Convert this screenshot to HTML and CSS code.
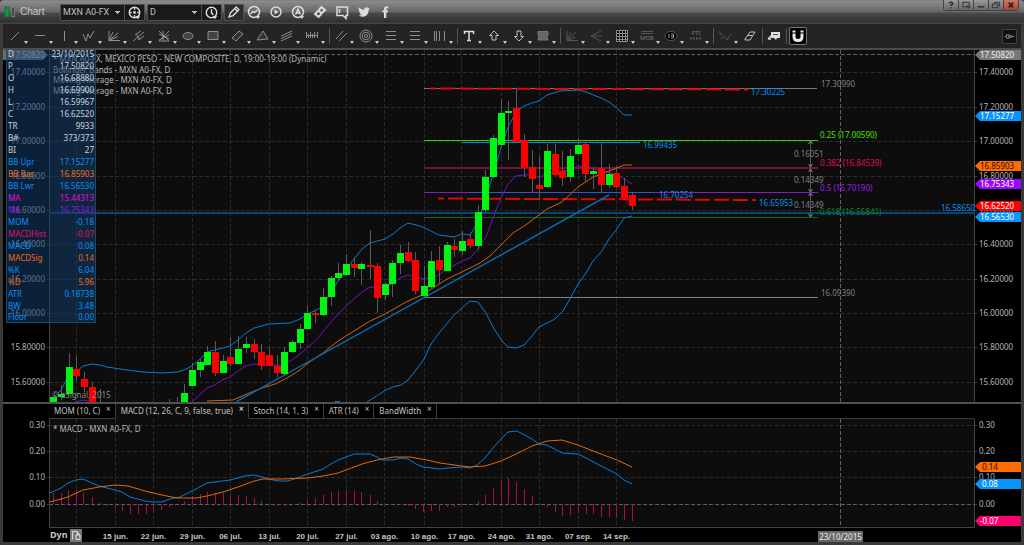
FILE: index.html
```html
<!DOCTYPE html>
<html lang="es">
<head>
<meta charset="utf-8">
<title>Chart</title>
<link rel="stylesheet" href="styles.css">
</head>
<body>
<div class="window">
  <header class="titlebar">
    <svg class="logo" viewBox="0 0 13 12" aria-hidden="true"><rect x="1" y="1" width="4" height="10" fill="#0c9a48" stroke="#1c6b3a"/><rect x="7.500" y="1.500" width="3" height="9" fill="#444" stroke="#777"/></svg>
    <h1 class="title">Chart</h1>
    <div class="combo combo-symbol">
      <select aria-label="Symbol"><option>MXN A0-FX</option></select>
      <button type="button" aria-label="Symbol settings"><svg viewBox="0 0 20 20"><circle cx="10" cy="10" r="5.500" class="bold"/><circle cx="10" cy="10" r="1.500" class="solid"/><path d="M10 5v2M10 13v2M5 10h2M13 10h2" class="bold"/><path d="M11 14h5l-2.500 3z" class="solid"/></svg></button>
    </div>
    <div class="combo combo-interval">
      <select aria-label="Interval"><option>D</option></select>
      <button type="button" aria-label="Time template"><svg viewBox="0 0 20 20"><circle cx="10" cy="10" r="5.500" class="bold"/><path d="M10 6.500v4l2 2" class="bold"/><path d="M11 14h5l-2.500 3z" class="solid"/></svg></button>
    </div>
    <button type="button" class="draw" aria-label="Draw"><svg viewBox="0 0 20 20"><path d="M4.500 15.500l1.500-4.500 6.500-6.500 3 3L9 14zM11 6.500l2.500 2.500" class="bold"/></svg></button>
    <nav class="actions" aria-label="Actions">
      <button type="button" aria-label="Studies"><svg viewBox="0 0 20 20"><circle cx="10" cy="10" r="5.500" class="bold"/><path d="M6.500 12l2.500-2.500 1.500 1L13.500 8" class="bold"/><path d="M12 14h4l-2 3z" class="solid"/></svg></button>
      <button type="button" aria-label="Playback"><svg viewBox="0 0 20 20"><circle cx="10" cy="10" r="5" class="bold"/><path d="M8.500 7.500l4 2.500-4 2.500z" class="solid"/></svg></button>
      <button type="button" aria-label="Alerts"><svg viewBox="0 0 20 20"><circle cx="10" cy="10" r="5.500" class="bold"/><path d="M7.500 12.500L10 7l2.500 5.500M8.500 11h3" class="bold"/><path d="M12 14h4l-2 3z" class="solid"/></svg></button>
      <button type="button" aria-label="Link"><svg viewBox="0 0 20 20"><path d="M9 7.500l2.500-2.500 3.500 3-3.500 3.500-2-1.500M11 12.500l-2.500 2.500L5 12l3.500-3.500 2 1.500" stroke="#ddd" stroke-width="2"/></svg></button>
      <button type="button" aria-label="Chat"><svg viewBox="0 0 20 20"><path d="M5 5h10.500v8.500H14v3l-3-3H5zM7.500 7v4" class="bold"/></svg></button>
      <button type="button" aria-label="Twitter"><svg viewBox="0 0 20 20"><path class="solid" d="M16 6.300l-1.400.4 1-1.300-1.500.5c-1.600-1.600-4.200-.4-3.900 1.900C8 7.700 6.200 6.800 5 5.300c-.8 1.400-.3 2.700.7 3.400l-1-.3c0 1.200.9 2.200 2 2.500H5.600c.4 1 1.200 1.600 2.300 1.700-.9.800-2.100 1.100-3.500 1 5 2.900 10.400-.3 10.200-5.700z"/></svg></button>
      <button type="button" aria-label="Facebook"><svg viewBox="0 0 20 20"><path class="solid" d="M8 16v-5.500H6.500V8.300H8V7c0-2.200 1.200-3 4-2.700v2.100c-1.300-.1-1.700 0-1.700.9v1H12l-.3 2.200h-1.400V16z"/></svg></button>
    </nav>
    <div class="controls">
      <button type="button" aria-label="Help"><svg viewBox="0 0 15 11"><path d="M5.500 3.500q2-2 4 0 0 1.500-2 2.200v1M7.500 8v1.200" stroke-width="1.500"/></svg></button>
      <button type="button" aria-label="Popout"><svg viewBox="0 0 15 11"><path d="M7 7.500H4v-5h7V6M8.500 6.500h3v2h-3z"/></svg></button>
      <button type="button" aria-label="Minimize"><svg viewBox="0 0 15 11"><path d="M4 7.500h7" stroke-width="1.500"/></svg></button>
      <button type="button" aria-label="Restore"><svg viewBox="0 0 15 11"><path d="M3.500 4.500h6v4h-6zM6 4V2.500h5.500v4H10"/></svg></button>
      <button type="button" class="close" aria-label="Close"><svg viewBox="0 0 15 11"><path d="M5 3l5 5M10 3L5 8"/></svg></button>
    </div>
  </header>

  <div class="toolbar" role="toolbar" aria-label="Drawing tools">
    <div class="group g13">
      <button type="button" class="tool" aria-label="Trend line"><svg viewBox="0 0 20 20"><path d="M6 14l8-8"/></svg></button>
      <button type="button" class="tool" aria-label="Horizontal line"><svg viewBox="0 0 20 20"><path d="M5 9.500h10"/></svg></button>
      <button type="button" class="tool" aria-label="Vertical line"><svg viewBox="0 0 20 20"><path d="M9.500 5v10"/></svg></button>
      <button type="button" class="tool" aria-label="Elliott wave"><svg viewBox="0 0 20 20"><path d="M4 8l3 7 2-7 2 4 4-7"/></svg></button>
      <button type="button" class="tool" aria-label="Speed fan"><svg viewBox="0 0 20 20"><path d="M5 5v9.500h11M5 14.500L9 6M5 14.500L14 7M5 14.500l9-4"/></svg></button>
      <button type="button" class="tool" aria-label="Pitchfork"><svg viewBox="0 0 20 20"><path d="M4 15L15 6M6 9l6-4M9 14l6-4M7 8l4 6"/></svg></button>
      <button type="button" class="tool" aria-label="Gann fan"><svg viewBox="0 0 20 20"><path d="M5 5l10 10M5 15L15 5M9 5v10M5 8l10 5M5 14l10-5M5 15h10"/></svg></button>
      <button type="button" class="tool" aria-label="Ellipse"><svg viewBox="0 0 20 20"><ellipse cx="10" cy="10" rx="5" ry="3.500" fill="#444"/></svg></button>
      <button type="button" class="tool" aria-label="Rectangle"><svg viewBox="0 0 20 20"><path d="M5 5.500h10v8H5z" fill="#444"/></svg></button>
      <button type="button" class="tool" aria-label="Parallelogram"><svg viewBox="0 0 20 20"><path d="M4 12l7-7 4 3-7 7z" fill="#333"/></svg></button>
      <button type="button" class="tool" aria-label="Triangle"><svg viewBox="0 0 20 20"><path d="M4 14l6-9 5 8z" fill="#333"/></svg></button>
      <button type="button" class="tool" aria-label="Channel"><svg viewBox="0 0 20 20"><path d="M4 10l11-5M4 12.500l11-5M4 15l11-5"/></svg></button>
      <button type="button" class="tool" aria-label="Time cycles"><svg viewBox="0 0 20 20"><path d="M4.500 6v6M8.500 6v6M12.500 6v6M15.500 6v6M4 9.500h12M6.500 8v4M10.500 8v4"/></svg></button>
    </div>
    <i class="sep"></i>
    <div class="group g5">
      <button type="button" class="tool" aria-label="Parallel lines"><svg viewBox="0 0 20 20"><path d="M5 13l7-8M8 15l8-8"/></svg></button>
      <button type="button" class="tool" aria-label="Fibonacci circles"><svg viewBox="0 0 20 20"><circle cx="10" cy="10" r="6"/><circle cx="10" cy="10" r="3.800"/><circle cx="10" cy="10" r="1.600"/></svg></button>
      <button type="button" class="tool" aria-label="Retracement"><svg viewBox="0 0 20 20"><path d="M5 5.500h10M5 9.500h10M5 13.500h10"/></svg></button>
      <button type="button" class="tool" aria-label="Extension"><svg viewBox="0 0 20 20"><path d="M5 5.500h10M5 9.500h10M5 13.500h10"/></svg></button>
      <button type="button" class="tool" aria-label="Time zones"><svg viewBox="0 0 20 20"><path d="M4.500 5v10M6.500 5v10M9.500 5v10M14.500 5v10"/></svg></button>
    </div>
    <i class="sep"></i>
    <div class="group g4">
      <button type="button" class="tool" aria-label="Text"><svg viewBox="0 0 20 20"><path d="M5.500 8V5.500h9V8M10 5.500v9M8 14.500h4" class="bold"/></svg></button>
      <button type="button" class="tool" aria-label="Arrow up"><svg viewBox="0 0 20 20"><path d="M10 5l4.500 4.500H12V14H8V9.500H5.500z" class="bright"/></svg></button>
      <button type="button" class="tool" aria-label="Arrow down"><svg viewBox="0 0 20 20"><path d="M10 15l4.500-4.500H12V5H8v5.500H5.500z" class="bright"/></svg></button>
      <button type="button" class="tool" aria-label="Note"><svg viewBox="0 0 20 20"><path d="M5 5.500h10v4l-1 1 1 3.500H5l1-4-1-1z" fill="#666" stroke="#777"/></svg></button>
    </div>
    <i class="sep"></i>
    <div class="group g6">
      <button type="button" class="tool dim" aria-label="Gann angles"><svg viewBox="0 0 20 20"><path d="M5 5v9.500h11M5 14.500L9 6M5 14.500L14 6M5 14.500l8-3"/></svg></button>
      <button type="button" class="tool dim" aria-label="Rays"><svg viewBox="0 0 20 20"><path d="M14 5L4 10l10 5M4 10h11"/></svg></button>
      <button type="button" class="tool" aria-label="Gann box"><svg viewBox="0 0 20 20"><path d="M4.500 4.500h11v11h-11zM4.500 7.500h11M4.500 10.500h11M4.500 13.500h11M7.500 4.500v11M10.500 4.500v11M13.500 4.500v11" fill="#000"/></svg></button>
      <button type="button" class="tool dim" aria-label="Make or break"><svg viewBox="0 0 20 20"><path d="M4 5.500h12M4 7.500h12"/><text x="10" y="14" text-anchor="middle" class="mini">MOB</text></svg></button>
      <button type="button" class="tool dim" aria-label="Ellipse projection"><svg viewBox="0 0 20 20"><ellipse cx="10" cy="10" rx="6" ry="4.500" fill="#000"/><path d="M8 8v4M10 8h2.500v4H10M10 10h2" class="bright"/></svg></button>
      <button type="button" class="tool dim" aria-label="Profit taking index"><svg viewBox="0 0 20 20"><text x="10" y="9" text-anchor="middle" class="mini">PTI</text><path d="M4 12.500h12" stroke-dasharray="2 1" stroke-width="2"/></svg></button>
    </div>
    <i class="sep"></i>
    <div class="group tail">
      <button type="button" class="tool dim" aria-label="Wave labels"><svg viewBox="0 0 20 20"><path d="M5 5v3h3M6 13l3-3 3 4 4-6"/></svg></button>
      <button type="button" class="tool plain" aria-label="Eraser"><svg viewBox="0 0 20 20"><path d="M5 13l5-7h5l-5 8H5zM8 9.500h4" class="bright"/></svg></button>
    </div>
    <i class="sep"></i>
    <button type="button" class="tool plain" aria-label="Comment"><svg viewBox="0 0 20 20"><path d="M7 6h9v6h-3l-1 2-2-2H7z" class="solid"/><path d="M4 13l3-3h3M4 13h3" class="bold"/><path d="M9 8.500h5" stroke="#555"/></svg></button>
    <i class="sep"></i>
    <button type="button" class="tool plain magnet" aria-label="Magnet" aria-pressed="true"><svg viewBox="0 0 16 16"><path d="M4 2.500v6q0 4 4 4t4-4v-6" stroke="#e8e8e8" stroke-width="3"/><path d="M2 5h4M10 5h4" stroke="#000"/></svg></button>
    <button type="button" class="pin" aria-label="Pin toolbar"><svg viewBox="0 0 15 15"><path d="M2 7.500h2M4 5.500h3v4H4zM7 6.500h3v2H7zM10 7.500h3"/></svg></button>
  </div>

  <main class="stage">
    <svg id="price" class="plot" viewBox="3 50 1018 352" role="img" aria-label="MXN A0-FX"></svg>
    <table class="cursor" aria-label="Cursor window"><tbody id="cursor"></tbody></table>
  </main>

  <div class="tabs" role="tablist">
    <div class="tab"><button type="button" role="tab">MOM (10, C)</button><button type="button" class="x" aria-label="Close MOM">×</button></div>
    <div class="tab active"><button type="button" role="tab" aria-selected="true">MACD (12, 26, C, 9, false, true)</button><button type="button" class="x" aria-label="Close MACD">×</button></div>
    <div class="tab"><button type="button" role="tab">Stoch (14, 1, 3)</button><button type="button" class="x" aria-label="Close Stoch">×</button></div>
    <div class="tab"><button type="button" role="tab">ATR (14)</button><button type="button" class="x" aria-label="Close ATR">×</button></div>
    <div class="tab"><button type="button" role="tab">BandWidth</button><button type="button" class="x" aria-label="Close BandWidth">×</button></div>
  </div>

  <section class="study">
    <svg id="macd" class="plot" viewBox="3 419 1018 123" role="img" aria-label="MACD"></svg>
    <div class="dyn"><span>Dyn</span><button type="button" aria-label="Lock scale"><svg viewBox="0 0 12 13"><path d="M2.500 10.500v-8h5v3M6 6h4v4.500H6zM7 6V4.500h2V6" fill="none" stroke="#ddd"/></svg></button></div>
  </section>
</div>
<script src="chart.js"></script>
</body>
</html>
```
FILE: styles.css
```css
* { box-sizing: border-box; }
body {
  margin: 0;
  background: #000;
  color: #c0c0c0;
  font: 8px/12px "Noto Sans", Arial, sans-serif;
}
button, select { font: inherit; color: inherit; padding: 0; margin: 0; border: 0; background: none; }
.window {
  min-height: 100vh;
  background: #3b3b3b;
  padding: 0 3px 3px;
  overflow: hidden;
}
.titlebar {
  display: flex;
  align-items: center;
  height: 24px;
  margin: 0 -3px;
  padding-left: 4px;
  border-radius: 4px 4px 0 0;
  background: linear-gradient(#777 0, #8c8c8c 1px, #666 12px, #4a4a4a 13px, #303030 22px, #444 23px);
}
.titlebar svg, .toolbar svg { display: block; fill: none; stroke: #8e8e8e; }
.titlebar svg { stroke: #ddd; }
.titlebar .solid, .toolbar .solid { fill: #dcdcdc; stroke: none; }
.titlebar .bold, .toolbar .bold { stroke: #dcdcdc; stroke-width: 1.5; }
.toolbar .bright { stroke: #c0c0c0; }
.logo { width: 13px; height: 12px; }
.title { margin: 0 0 0 3px; width: 40px; font-family: "Liberation Sans", Arial, sans-serif; font-size: 10px; font-weight: 400; color: #c8c8c8; }
.combo { display: flex; height: 17px; border: 1px solid #505050; border-radius: 1px; background: #191919; }
.combo select {
  appearance: none;
  flex: 1;
  min-width: 0;
  padding-left: 2px;
  font-family: Roboto, Arial, sans-serif;
  font-size: 9px;
  background: linear-gradient(#bbb, #bbb) no-repeat right 4px top 6px / 5px 1px, linear-gradient(#bbb, #bbb) no-repeat right 5px top 7px / 3px 1px, linear-gradient(#bbb, #bbb) no-repeat right 6px top 8px / 1px 1px;
}
.combo button { width: 20px; height: 15px; border-left: 1px solid #505050; }
.combo button svg { width: 19px; height: 19px; margin-top: -2px; }
.combo-symbol { width: 85px; }
.combo-interval { width: 75px; margin-left: 2px; }
.draw { width: 20px; height: 17px; margin-left: 2px; border: 1px solid #505050; background: #2c2c2c; }
.draw svg { width: 18px; height: 18px; margin-top: -2px; }
.actions { display: flex; gap: 2px; }
.actions svg { width: 20px; height: 20px; }
.controls { display: flex; align-self: flex-start; gap: 1px; margin: 0 5px 0 auto; padding: 0 1px 1px; background: #444; border-radius: 0 0 3px 3px; }
.controls button { width: 14px; height: 10px; background: linear-gradient(#999, #686868); }
.controls svg { width: 14px; height: 10px; stroke: #2c2c2c; }
.controls .close { background: linear-gradient(#cb7767, #a84636); }
.controls .close svg { stroke: #30201c; stroke-width: 2; }

.toolbar {
  display: flex;
  align-items: center;
  height: 26px;
  padding-left: 2px;
  border-bottom: 2px solid #4c4c4c;
  background: #242424;
}
.group { display: grid; flex: none; }
.g13 { width: 322px; grid-template-columns: repeat(13, 1fr); }
.g5 { width: 124px; grid-template-columns: repeat(5, 1fr); }
.g4 { width: 99px; grid-template-columns: repeat(4, 1fr); }
.g6 { width: 149px; grid-template-columns: repeat(6, 1fr); }
.tail { width: 45px; grid-template-columns: 25px 20px; }
.sep { flex: none; width: 1px; height: 16px; margin: 0 1px 0 2px; background: #555; }
.tool { display: flex; align-items: flex-end; height: 20px; }
.tool svg { width: 20px; height: 20px; flex: none; }
.tool::after { content: ""; margin: 0 0 2px -1px; border: solid transparent; border-width: 3px 2px 0; border-top-color: #ccc; }
.plain::after { display: none; }
.dim svg { stroke: #555; }
.dim .bright { stroke: #999; }
.mini { font-size: 6px; fill: #777; stroke: none; }
.magnet { width: 20px; }
.magnet svg { width: 18px; height: 18px; margin: 1px; border: 1px solid #777; border-radius: 2px; background: #000; }
.pin { width: 15px; height: 15px; margin: 0 4px 0 auto; border: 1px solid #444; border-radius: 2px; background: #111; }
.pin svg { width: 13px; height: 13px; }

.stage { position: relative; overflow: hidden; border-bottom: 2px solid #505050; background: #000; }
.plot { display: block; width: 100%; height: auto; font-size: 8px; }
.cursor {
  position: absolute;
  top: -3px;
  left: 3px;
  width: 90px;
  border: 1px solid #1b4a62;
  border-spacing: 0;
  background: rgba(20, 60, 105, .55);
}
.cursor th, .cursor td { height: 12px; padding: 0 1px; line-height: 12px; }
.cursor tr:last-child > * { height: 10px; line-height: 10px; }
.cursor th { font-weight: 400; text-align: left; }
.cursor td { text-align: right; }

.tabs { display: flex; height: 15px; padding-left: 46px; background: #000; }
.tab { display: flex; gap: 6px; padding: 0 4px 0 5px; border: solid #3c3c3c; border-width: 0 1px 1px 0; }
.tab.active { background: #0d0d0d; border-bottom-color: #0d0d0d; }
.tabs::after { content: ""; flex: 1; margin-right: 47px; border-bottom: 1px solid #3c3c3c; }
.x { align-self: flex-start; height: 9px; line-height: 8px; }
.active .x { color: #fff; }

.study { display: grid; background: #000; }
.study > * { grid-area: 1 / 1; }
.dyn { display: flex; align-self: end; justify-self: start; align-items: center; gap: 2px; height: 14px; margin-left: 47px; font-size: 9px; font-weight: 700; }
.dyn button { width: 12px; height: 13px; background: #777; }
.dyn svg { display: block; }

.grid { stroke: #292929; stroke-dasharray: 4 2; }
.cross { stroke: #606060; stroke-dasharray: 4 2; }
.edge { stroke: #444; }
.crisp { shape-rendering: crispEdges; }
.line { fill: none; stroke-width: 1; stroke-linejoin: round; }
.axis { fill: #b4b4b4; }
.head { fill: #b8b8b8; }
.date { fill: #c4c4c4; font-family: "Liberation Sans", Arial, sans-serif; font-weight: 700; }
```
FILE: chart.js
```javascript
const NS = 'http://www.w3.org/2000/svg';
const BLUE = '#0d7bd0', ORANGE = '#d8600c', PURPLE = '#7812ba', UP = '#00f510', DOWN = '#fa0000';

function add(svg, name, attrs, text) {
  const el = document.createElementNS(NS, name);
  for (const key in attrs) el.setAttribute(key, attrs[key]);
  if (text !== undefined) el.textContent = text;
  svg.appendChild(el);
}
const line = (s, x1, y1, x2, y2, more) => add(s, 'line', { x1, y1, x2, y2, ...more });
const path = (s, points, stroke) => add(s, 'polyline', { points, stroke, class: 'line' });
const text = (s, x, y, str, more) => add(s, 'text', { x, y, ...more }, str);

function tag(s, y, str, fill, color, x = 980) {
  add(s, 'path', { d: `M975 ${y}l5-5h41v10h-41z`, fill });
  text(s, x, y + 3, str, { fill: color });
}

const weeks = [76.5, 115.5, 153.5, 192.5, 230.5, 269.5, 307.5, 346.5, 384.5, 424.5, 461.5, 501.5, 539.5, 578.5, 616.5];
const price = document.getElementById('price');
const macd = document.getElementById('macd');

/* price pane: background, grid and scales */
add(price, 'rect', { x: 49, y: 50, width: 926, height: 352, fill: '#0d0d0d' });
weeks.forEach(x => line(price, x, 50, x, 402, { class: 'grid crisp' }));
[['17.40000', 72.5], ['17.20000', 107.5], ['17.00000', 141.5], ['16.80000', 176.5], ['16.60000', 210.5],
 ['16.40000', 244.5], ['16.20000', 279.5], ['16.00000', 313.5], ['15.80000', 347.5], ['15.60000', 382.5]].forEach(([t, y]) => {
  line(price, 49, y, 974, y, { class: 'grid crisp' });
  line(price, 47, y, 50, y, { class: 'edge' });
  line(price, 974, y, 977, y, { class: 'edge' });
  text(price, 45, y + 2.5, t, { class: 'axis', 'text-anchor': 'end' });
  text(price, 979, y + 2.5, t, { class: 'axis' });
});
line(price, 49.5, 50, 49.5, 402, { class: 'edge' });
line(price, 974.5, 50, 974.5, 402, { class: 'edge' });
line(price, 49, 54.5, 974, 54.5, { class: 'cross crisp' });
line(price, 840.5, 50, 840.5, 402, { class: 'cross crisp' });
add(price, 'path', { d: 'M3 50h40l5 5-5 5H3z', fill: '#6c6c6c' });
text(price, 45, 58, '17.50820', { fill: '#ddd', 'text-anchor': 'end' });

/* levels */
[[424, 88.5, 817, '#777', 1], [424, 140.5, 818, '#3cc800', 1], [424, 168, 818, '#780f3c', 2], [424, 192.5, 818, '#8818d0', 1],
 [462, 142.5, 640, '#0b84dc', 1], [469, 192.5, 655, '#2858dc', 1], [49, 213, 974, '#07447a', 2],
 [424, 217.5, 818, '#086c12', 1], [424, 297.5, 818, '#808080', 1]].forEach(([x1, y, x2, stroke, w]) =>
  line(price, x1, y, x2, y, { stroke, 'stroke-width': w }));
line(price, 430, 88.5, 748, 89.5, { stroke: '#dc0808', 'stroke-width': 2, 'stroke-dasharray': '15 4', 'stroke-dashoffset': 9 });
line(price, 438, 198.5, 756, 200, { stroke: '#dc0808', 'stroke-width': 2, 'stroke-dasharray': '15 4', 'stroke-dashoffset': 9 });

/* averages, bands and trend line */
path(price, '53,398 61,390 68,377 76,372 83,366 92,364 100,365 107,367 127,370 143,372 162,373 177,372 184,370 192,366 200,359 207,352 215,350 230,346 238,340 246,333 254,328 269,324 290,323 300,319 308,314 320,308 331,293 338,281 346,270 354,259 362,249 370,243 385,239 393,234 400,228 408,223 420,226 431,231 439,235 454,237 462,234 470,235 478,222 485,200 493,175 501,148 508,127 516,112 524,106 532,103 539,101 547,95 560,91 578,90 586,92 601,98 609,102 617,108 624,115 632,115', BLUE);
path(price, '367,402 386,390 393,387 401,385 408,380 416,370 424,359 431,344 439,333 455,314 462,308 470,301 478,302 486,313 493,327 502,341 508,347 516,348 524,345 532,336 539,327 555,319 563,311 571,297 578,284 586,273 593,261 602,251 609,239 617,229 624,218 632,216', BLUE);
line(price, 335, 401.5, 340, 401.5, { stroke: BLUE });
path(price, '192,402 207,388 215,385 222,380 230,377 238,371 246,366 254,364 270,365 282,365 292,360 300,354 308,347 317,339 331,322 347,305 362,292 370,287 380,288 392,284 400,278 408,275 424,279 437,276 447,269 462,261 470,258 478,249 486,237 493,218 501,198 508,184 516,176 524,175 535,175 539,178 547,173 570,170 578,166 586,167 601,171 617,174 624,179 632,184', PURPLE);
path(price, '75,402 83,400 95,402', PURPLE);
path(price, '207,401 233,400 247,394 262,388 275,384 287,378 300,370 308,363 323,353 338,341 354,331 370,321 383,315 392,310 408,301 422,295 447,279 470,268 480,263 490,256 502,244 513,233 527,224 539,215 547,209 562,202 578,187 593,177 601,174 609,171 617,168 624,165 632,165', ORANGE);
line(price, 236, 402, 609, 195, { stroke: '#0a68ac', 'stroke-width': 1.5 });

/* candles: x, high, body top, body bottom, low, direction */
[[53,397,397,402,402,1],[61,385,394,397,400,1],[69,353,367,394,394,1],[76,355,369,376,381,0],[84,372,379,387,392,0],[92,382,387,402,402,0],
 [100,389,402,402,402,0],[169,399,402,402,402,0],[177,397,402,402,402,0],[184,384,393,402,402,1],[192,363,370,386,386,1],[200,358,362,370,377,1],
 [207,346,352,365,365,1],[215,341,352,373,376,0],[223,355,361,373,373,1],[230,337,357,364,366,0],[238,336,349,364,364,1],[246,337,344,348,353,1],
 [254,339,344,352,359,0],[261,344,352,366,370,0],[269,347,355,366,366,0],[277,355,366,373,377,0],[284,347,352,374,375,1],[292,340,342,352,353,1],
 [300,324,329,343,349,1],[307,306,313,329,330,1],[315,310,313,315,323,0],[323,288,297,315,316,1],[331,276,278,297,306,1],[338,263,273,278,280,1],
 [346,254,264,275,276,1],[354,257,264,268,277,0],[361,262,264,269,285,1],[370,230,265,267,279,0],[377,263,266,298,313,0],[385,282,284,295,300,1],
 [392,260,263,284,297,1],[400,245,253,263,274,1],[408,242,252,261,262,0],[415,252,260,291,294,0],[424,266,286,296,297,1],[431,251,261,287,288,1],
 [439,246,260,270,284,0],[447,242,245,271,271,1],[454,239,246,250,257,0],[462,231,241,251,255,1],[470,233,239,246,248,0],[478,205,212,246,250,1],
 [485,170,177,210,212,1],[493,135,138,177,178,1],[501,99,113,145,145,1],[508,101,111,113,160,1],[516,89,108,142,143,0],[524,134,140,168,177,0],
 [532,150,167,179,192,0],[539,156,185,189,200,0],[547,144,151,187,188,1],[555,144,154,175,176,0],[562,151,171,178,186,0],[570,149,156,177,182,1],
 [578,138,145,154,155,1],[585,142,144,174,182,0],[593,167,171,174,189,1],[601,142,168,185,192,0],[609,164,174,185,188,1],[616,166,173,187,188,0],
 [624,178,186,199,200,0],[632,193,195,206,210,0]].forEach(([x, h, t, b, l, up]) => {
  line(price, x + .5, h, x + .5, l, { stroke: '#5a5a5a' });
  if (b > t) add(price, 'rect', { x: x - 3, y: t, width: 7, height: b - t, fill: up ? UP : DOWN });
});

/* level spans */
line(price, 810.5, 141, 810.5, 217, { stroke: '#555' });
[[141, 3], [167, -3], [169, 3], [192, -3], [193, 3], [217, -3]].forEach(([y, d]) =>
  add(price, 'path', { d: `M808.500 ${y + d}L810.500 ${y}L812.500 ${y + d}`, fill: 'none', stroke: '#888' }));
[[794, 157, '0.16051', '#808080'], [794, 183, '0.14349', '#808080'], [794, 208, '0.14349', '#808080'],
 [821, 87, '17.30990', '#808080'], [821, 296, '16.09390', '#808080'],
 [820, 138, '0.25 (17.00590)', '#44e000'], [820, 166, '0.382 (16.84539)', '#e00c5c'],
 [820, 191, '0.5 (16.70190)', '#a01cf0'], [820, 215, '0.618 (16.55841)', '#0a8420'],
 [751, 95, '17.30225', '#0890f0'], [643, 148, '16.99435', '#0890f0'], [659, 198, '16.70254', '#0890f0'],
 [759, 206, '16.65953', '#0890f0'], [941, 211, '16.58650', '#0890f0']].forEach(([x, y, t, fill]) =>
  text(price, x, y, t, { fill }));

text(price, 53, 62, '* MXN A0-FX, MEXICO PESO - NEW COMPOSITE, D, 19:00-19:00 (Dynamic)', { class: 'head' });
text(price, 53, 73, 'Bollinger Bands - MXN A0-FX, D', { class: 'head' });
text(price, 53, 83, 'Moving Average - MXN A0-FX, D', { class: 'head' });
text(price, 53, 94, 'Moving Average - MXN A0-FX, D', { class: 'head' });
text(price, 52, 398, '© eSignal, 2015', { fill: '#888' });

tag(price, 55, '17.50820', '#777', '#eee');
tag(price, 116, '17.15277', '#0894ff', '#fff');
tag(price, 166, '16.85903', '#ff6c00', '#221000');
tag(price, 184, '16.75343', '#9608ff', '#fff');
tag(price, 206, '16.62520', '#ff0000', '#fff');
tag(price, 217, '16.56530', '#0894ff', '#fff');

/* MACD pane */
add(macd, 'rect', { x: 49, y: 419, width: 926, height: 108, fill: '#0d0d0d' });
weeks.forEach(x => line(macd, x, 419, x, 527, { class: 'grid crisp' }));
[['0.30', 425.5], ['0.20', 451.5], ['0.10', 477.5], ['0.00', 504.5]].forEach(([t, y]) => {
  line(macd, 49, y, 974, y, { class: (t === '0.00' ? 'cross' : 'grid') + ' crisp' });
  line(macd, 47, y, 50, y, { class: 'edge' });
  line(macd, 974, y, 977, y, { class: 'edge' });
  text(macd, 45, y + 2.5, t, { class: 'axis', 'text-anchor': 'end' });
  text(macd, 979, y + 2.5, t, { class: 'axis' });
});
add(macd, 'path', { d: 'M49.500 419v108.500h925V419', fill: 'none', class: 'edge' });
line(macd, 840.5, 419, 840.5, 527, { class: 'cross crisp' });

[[53,493],[61,493],[68,490],[76,490],[83,493],[92,497],[99,503],[107,506],[115,508],[122,511],[130,514],[138,514],[146,514],[153,512],[161,510],[169,507],
 [184,501],[192,496],[200,494],[207,492],[215,493],[223,493],[230,495],[238,495],[246,496],[254,498],[261,501],[277,506],[284,506],[292,505],[300,503],
 [307,500],[315,498],[323,495],[331,492],[338,491],[346,490],[354,491],[361,492],[370,495],[377,501],[392,505],[400,505],[408,506],[415,509],[423,512],
 [431,511],[439,511],[447,507],[454,507],[462,505],[478,501],[485,495],[493,488],[501,481],[508,478],[516,482],[524,489],[532,496],[547,507],[555,512],
 [562,516],[570,515],[578,513],[586,514],[593,514],[601,517],[609,517],[616,517],[624,520],[632,521]].forEach(([x, y]) =>
  line(macd, x + .5, 504, x + .5, y, { stroke: '#b40850' }));
path(macd, '50,493 61,488 68,483 76,480 83,479 92,483 99,486 115,490 122,492 130,497 145,501 153,502 162,502 170,499 180,497 192,491 207,483 230,480 245,476 254,475 262,477 273,480 280,481 288,481 297,478 308,474 323,469 331,464 338,460 346,457 354,454 370,454 377,457 383,460 393,460 402,458 408,459 416,464 423,467 432,468 440,469 447,468 462,467 470,468 477,465 485,458 493,448 501,439 508,432 517,431 532,439 539,444 547,445 562,453 578,454 586,458 601,466 609,470 617,474 624,480 632,484', BLUE);
path(macd, '50,502 68,497 83,490 99,487 115,485 128,486 145,491 162,495 177,498 197,498 207,496 223,492 238,487 254,481 263,479 283,479 308,478 323,476 338,473 346,470 362,464 377,460 393,457 410,457 427,460 440,463 462,466 470,467 485,466 501,461 516,454 532,446 547,441 562,440 578,445 593,451 617,460 632,467', '#e0680c');
text(macd, 53, 432, '* MACD - MXN A0-FX, D', { class: 'head' });
tag(macd, 467, '0.14', '#ff6c00', '#221000', 982);
tag(macd, 484, '0.08', '#0894ff', '#fff', 982);
tag(macd, 521, '-0.07', '#ff0070', '#fff');

['15 jun.', '22 jun.', '29 jun.', '06 jul.', '13 jul.', '20 jul.', '27 jul.', '03 ago.', '10 ago.', '17 ago.', '24 ago.', '31 ago.', '07 sep.', '14 sep.'].forEach((t, i) =>
  text(macd, weeks[i + 1], 539, t, { class: 'date', 'text-anchor': 'middle' }));
add(macd, 'rect', { x: 818, y: 531, width: 45, height: 11, fill: '#666' });
text(macd, 840.5, 539.5, '23/10/2015', { fill: '#eee', 'text-anchor': 'middle' });

/* cursor window rows */
const W = '#d0d4d8', B = '#0890f4', O = '#f06a10';
document.getElementById('cursor').innerHTML = [
  ['D', '23/10/2015', W], ['P', '17.50820', W], ['O', '16.68880', W], ['H', '16.69900', W], ['L', '16.59967', W], ['C', '16.62520', W],
  ['TR', '9933', W], ['B#', '373/373', W], ['BI', '27', W], ['BB Upr', '17.15277', B], ['BB Bas', '16.85903', O], ['BB Lwr', '16.56530', B],
  ['MA', '15.44313', '#e00ce0'], ['MA', '16.75343', '#8c16e0'], ['MOM', '-0.18', B], ['MACDHist', '-0.07', '#e00c64'], ['MACD', '0.08', B],
  ['MACDSig', '0.14', O], ['%K', '6.04', B], ['%D', '5.96', O], ['ATR', '0.18738', B], ['BW', '3.48', B], ['Floor', '0.00', B]
].map(([k, v, c]) => `<tr style="color:${c}"><th scope="row">${k}</th><td>${v}</td></tr>`).join('');
```
